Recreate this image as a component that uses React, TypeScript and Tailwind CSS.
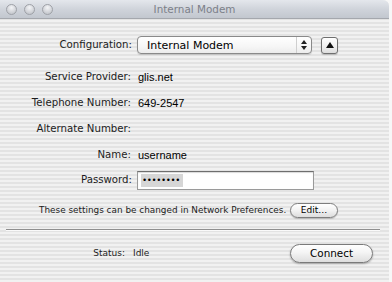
const label = "text-right text-[10.2px] text-[#1c1c1c] leading-none";
const lucida = { fontFamily: '"Lucida Grande", "DejaVu Sans", sans-serif' };

const Light = () => (
  <span className="w-[11px] h-[11px] rounded-full border border-[#9ea1a7] bg-[radial-gradient(circle_at_50%_30%,#f4f5f7_0%,#d3d5da_55%,#b9bcc2_100%)]" />
);

const Row = ({ name, value }: { name: string; value?: string }) => (
  <div className="flex items-center h-[26px]">
    <span className={`w-[131px] ${label}`}>{name}</span>
    {value && (
      <span className="ml-[7px] text-[11px] leading-none text-black font-['Liberation_Sans',Arial,sans-serif]">
        {value}
      </span>
    )}
  </div>
);

export default function App() {
  return (
    <div className="w-[392px] h-[282px] bg-[#f7f7f7] overflow-hidden" style={lucida}>
      <div className="w-[389px] h-[282px] rounded-tr-[6px] overflow-hidden flex flex-col bg-[image:repeating-linear-gradient(180deg,#f1f1f1_0px,#f1f1f1_2px,#e3e3e3_2px,#e3e3e3_4px)]">
        {/* title bar */}
        <div className="relative h-[19px] flex items-center pl-[6px] gap-[7px] border-b border-[#a4a7ad] bg-[image:linear-gradient(180deg,#e4e7ec_0%,#d0d4db_50%,#c2c7cf_100%)]">
          <Light />
          <Light />
          <Light />
          <span className="absolute inset-0 flex items-center justify-center text-[10.4px] text-[#7c8089] leading-none">
            Internal Modem
          </span>
        </div>

        <div className="flex flex-col pt-[17px]">
          {/* configuration */}
          <div className="flex items-center h-[18px]">
            <span className={`w-[132px] ${label}`}>Configuration:</span>
            <div className="ml-[5px] w-[175px] h-[18px] flex rounded-[4px] border border-[#8a8a8a] bg-[image:linear-gradient(180deg,#ffffff_0%,#f6f6f6_60%,#ececec_100%)] shadow-[0_1px_1px_rgba(0,0,0,0.15)]">
              <span className="flex-1 flex items-center pl-[9px] text-[11px] leading-none text-black">
                Internal Modem
              </span>
              <span className="w-[15px] border-l border-[#cfcfcf] flex flex-col items-center justify-center gap-[2px]">
                <svg width="6" height="4" viewBox="0 0 6 4">
                  <path d="M0 4 L3 0 L6 4 Z" fill="#222" />
                </svg>
                <svg width="6" height="4" viewBox="0 0 6 4">
                  <path d="M0 0 L3 4 L6 0 Z" fill="#222" />
                </svg>
              </span>
            </div>
            <div className="ml-[9px] w-[17px] h-[17px] rounded-[3px] border border-[#6f6f6f] flex items-center justify-center bg-[image:linear-gradient(180deg,#ffffff_0%,#efefef_60%,#dcdcdc_100%)] shadow-[0_1px_1px_rgba(0,0,0,0.2)]">
              <svg width="8" height="6" viewBox="0 0 8 6">
                <path d="M0 6 L4 0 L8 6 Z" fill="#111" />
              </svg>
            </div>
          </div>

          <div className="mt-[10px]">
            <Row name="Service Provider:" value="glis.net" />
            <Row name="Telephone Number:" value="649-2547" />
            <Row name="Alternate Number:" />
            <Row name="Name:" value="username" />
          </div>

          {/* password */}
          <div className="flex items-center h-[24px]">
            <span className={`w-[132px] ${label}`}>Password:</span>
            <div className="ml-[5px] w-[177px] h-[19px] flex items-center pl-[3px] bg-white border border-[#9a9a9a] border-t-[#6e6e6e] shadow-[inset_0_1px_1px_rgba(0,0,0,0.15)]">
              <span className="h-[13px] px-[2px] flex items-center bg-[#d6d6d6] text-[9px] tracking-[1.6px] leading-none text-black font-['Liberation_Sans',Arial,sans-serif]">
                ••••••••
              </span>
            </div>
          </div>

          {/* note */}
          <div className="mt-[10px] h-[16px] flex items-center">
            <span className="w-[290px] pl-[39px] text-[8.9px] leading-none text-[#1c1c1c]">
              These settings can be changed in Network Preferences.
            </span>
            <button className="w-[48px] h-[15px] rounded-full border border-[#7d7d7d] flex items-center justify-center text-[9px] leading-none text-black bg-[image:linear-gradient(180deg,#ffffff_0%,#f2f2f2_50%,#dddddd_100%)] shadow-[0_1px_1px_rgba(0,0,0,0.2)]">
              Edit…
            </button>
          </div>

          {/* separator */}
          <div className="mt-[11px] ml-[6px] w-[374px] border-t border-[#8f8f8f] border-b border-b-[#fafafa]" />

          {/* status */}
          <div className="mt-[13px] h-[19px] flex items-center">
            <div className="w-[290px] flex items-center">
              <span className="w-[125px] text-right text-[9px] leading-none text-[#1c1c1c]">Status:</span>
              <span className="ml-[8px] text-[9px] leading-none text-[#1c1c1c]">Idle</span>
            </div>
            <button className="w-[83px] h-[19px] rounded-full border border-[#7a7a7a] flex items-center justify-center text-[10.4px] leading-none text-black bg-[image:linear-gradient(180deg,#ffffff_0%,#f4f4f4_45%,#dedede_100%)] shadow-[0_1px_2px_rgba(0,0,0,0.3)]">
              Connect
            </button>
          </div>
        </div>
      </div>
    </div>
  );
}
